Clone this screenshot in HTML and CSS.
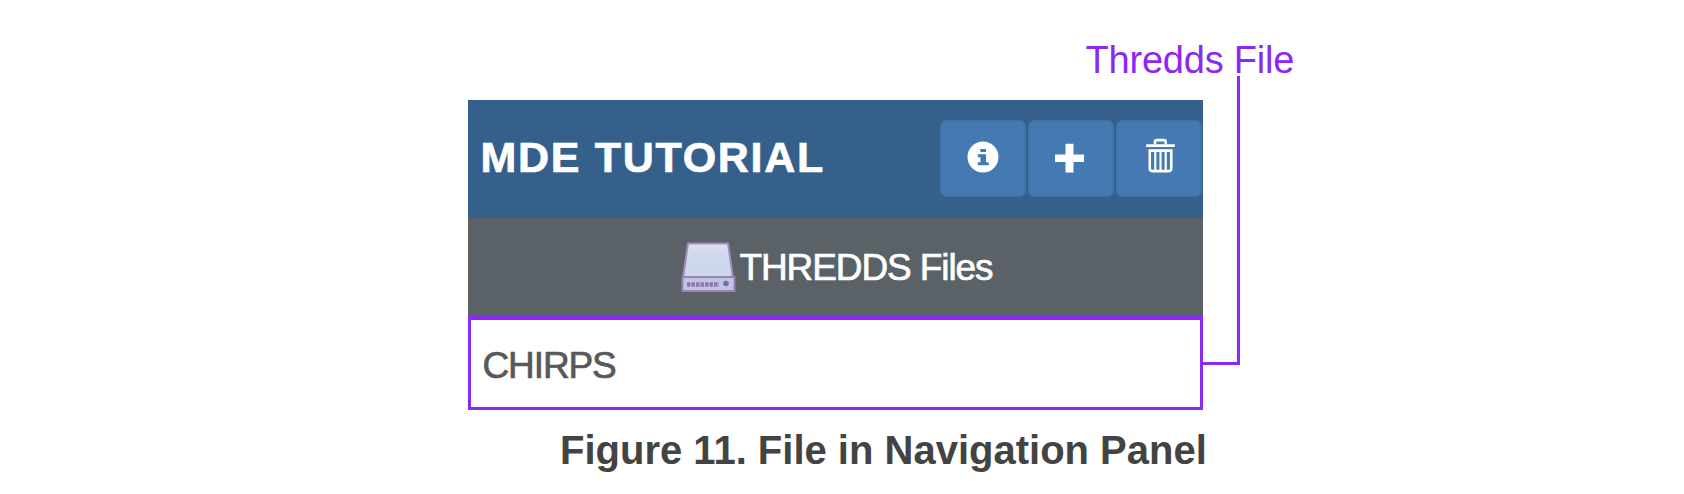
FILE: index.html
```html
<!DOCTYPE html>
<html lang="en">
<head>
<meta charset="utf-8">
<title>File in Navigation Panel</title>
<link rel="stylesheet" href="styles.css">
</head>
<body>
<figure class="figure">
  <div class="callout">Thredds File</div>
  <div class="panel">
    <header class="panel-header">
      <h1 class="panel-title">MDE TUTORIAL</h1>
      <div class="actions">
        <button class="action" aria-label="Information">
          <svg width="86" height="78" viewBox="0 0 86 78"><circle cx="43" cy="37" r="15.5" fill="#fff"/><path fill="#4479b1" d="M40.300 29h5.700v3h-5.700zM37.800 34.200h8.200v8h2.700v3H37.800v-3h2.600v-5h-2.600z"/></svg>
        </button>
        <button class="action" aria-label="Add">
          <svg width="86" height="78" viewBox="0 0 86 78"><path fill="#fff" d="M37.500 23.800h8v10.700h10.600v7.500H45.500v10.400h-8V42H27v-7.500h10.500z"/></svg>
        </button>
        <button class="action" aria-label="Delete">
          <svg width="86" height="78" viewBox="0 0 86 78" fill="none" stroke="#fff"><g transform="translate(.8 -.4)"><path stroke-width="2.8" d="M29.300 26H58"/><path stroke-width="2.6" d="M38.200 25v-2.500q0-2 2-2h6.700q2 0 2 2V25"/><path stroke-width="2.6" d="M33 31h21.500v18q0 2.500-2.500 2.500H35.500q-2.500 0-2.500-2.500z"/><path stroke-width="2.2" d="M38.500 31v20M43.700 31v20M48.900 31v20"/></g></svg>
        </button>
      </div>
    </header>
    <div class="group">
      <svg class="drive" width="58" height="56" viewBox="0 0 58 56"><defs><linearGradient id="lid" x1="0" y1="0" x2="0" y2="1"><stop offset="0" stop-color="#e0e4f2"/><stop offset=".3" stop-color="#d0d8ed"/><stop offset="1" stop-color="#cbd5ec"/></linearGradient></defs><path fill="url(#lid)" stroke="#a18bba" stroke-width="2" stroke-linejoin="round" d="M8 3.500h40l5 34H3z"/><path fill="#bfc6e2" stroke="#9b84b4" stroke-width="2" d="M2.500 37h52v14h-52z"/><path stroke="#8d79ab" stroke-width="4.500" stroke-dasharray="3.500 1" d="M7 44.500h32"/><circle cx="46" cy="43.500" r="2.800" fill="#8169a2"/></svg>
      <span class="group-name">THREDDS Files</span>
    </div>
    <div class="file"><span class="file-name">CHIRPS</span></div>
    <div class="connector"></div>
  </div>
  <figcaption class="caption">Figure 11. File in Navigation Panel</figcaption>
</figure>
</body>
</html>
```
FILE: styles.css
```css
* { box-sizing: border-box; }
body {
  margin: 0;
  background: #fff;
  font-family: "Liberation Sans", Arial, sans-serif;
}
.figure {
  width: 1684px;
  height: 494px;
  margin: 0;
  padding: 38px 0 0 467.5px;
  display: flex;
  flex-direction: column;
}
.callout {
  height: 62px;
  padding: 0 0 0 618px;
  font-size: 38px;
  line-height: 44px;
  letter-spacing: -.2px;
  color: #8c28f5;
  white-space: nowrap;
}
.panel {
  position: relative;
  width: 735.5px;
  height: 310px;
}
.panel-header {
  display: flex;
  align-items: flex-start;
  justify-content: space-between;
  height: 118px;
  padding: 20px 1px 0 13px;
  background: #35608b;
}
.panel-title {
  margin: 12px 0 0;
  font-size: 43px;
  line-height: 50px;
  letter-spacing: 1.7px;
  color: #fff;
  white-space: nowrap;
  -webkit-text-stroke: .7px #fff;
}
.actions {
  display: flex;
  gap: 2px;
}
.action {
  width: 86px;
  height: 77px;
  padding: 0;
  overflow: hidden;
  border: 2px solid #4074aa;
  border-radius: 7px;
  background: #4479b1;
}
.action svg {
  display: block;
  margin: -2px;
}
.group {
  display: flex;
  align-items: flex-start;
  height: 98px;
  padding: 22px 0 0 212px;
  background: #5a6167;
}
.drive {
  filter: blur(.6px);
}
.group-name {
  margin: 7px 0 0 2px;
  font-size: 37px;
  line-height: 42px;
  letter-spacing: -1.1px;
  color: #fff;
  white-space: nowrap;
  -webkit-text-stroke: .7px #fff;
}
.file {
  height: 94px;
  padding: 25px 0 0 12px;
  border: 3px solid #8c28f5;
  border-top-width: 4px;
  background: #fff;
}
.file-name {
  display: block;
  font-size: 37px;
  line-height: 42px;
  letter-spacing: -1.1px;
  color: #58585a;
  -webkit-text-stroke: .7px #58585a;
}
/* Leader line from the callout down to the file row */
.connector {
  position: absolute;
  left: 735.5px;
  top: -24px;
  width: 37px;
  height: 289px;
  border: solid #8c28f5;
  border-width: 0 3px 3px 0;
}
.caption {
  margin: 17px 0 0 92.5px;
  font-size: 40px;
  line-height: 46px;
  font-weight: bold;
  color: #434343;
  white-space: nowrap;
}
```
